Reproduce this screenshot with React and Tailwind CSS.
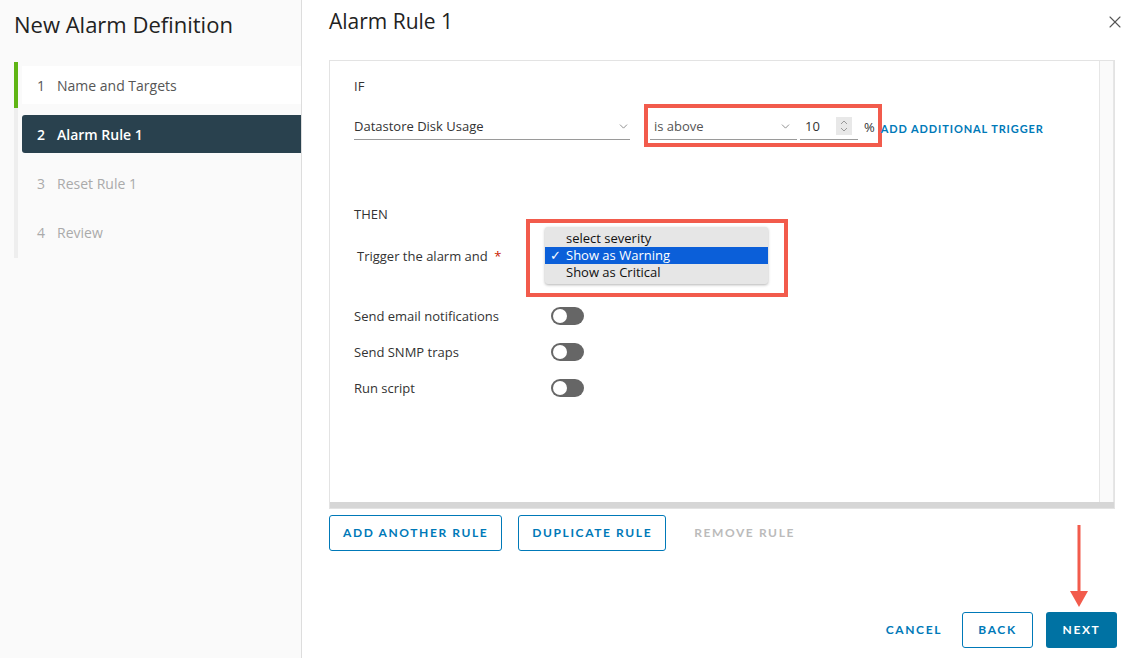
import { X, ChevronDown } from 'lucide-react';

const steps = [
  { n: 1, label: 'Name and Targets', state: 'done' },
  { n: 2, label: 'Alarm Rule 1', state: 'active' },
  { n: 3, label: 'Reset Rule 1', state: 'todo' },
  { n: 4, label: 'Review', state: 'todo' },
];

const caps = { fontFamily: 'Lato, "Noto Sans", sans-serif' };

const Toggle = () => (
  <div className="w-[33px] h-[18px] rounded-full bg-[#666] flex items-center px-[2px]">
    <div className="w-[14px] h-[14px] rounded-full bg-white" />
  </div>
);

// flechitas del input numerico
const Spinner = () => (
  <svg width="16" height="18" viewBox="0 0 16 18" className="mr-[6px]">
    <rect width="16" height="18" fill="#e8e8e8" />
    <path d="M5 7 L8 4 L11 7" fill="none" stroke="#999" strokeWidth="1" />
    <path d="M5 11 L8 14 L11 11" fill="none" stroke="#999" strokeWidth="1" />
  </svg>
);

const App = () => {
  return (
    <div className="w-[1125px] h-[658px] flex bg-white text-[#333] overflow-hidden" style={{ fontFamily: '"Open Sans", "Noto Sans", sans-serif' }}>
      {/* barra lateral con los pasos */}
      <div className="w-[302px] shrink-0 bg-[#fafafa] border-r border-[#ddd] flex flex-col">
        <h1 className="text-[22px] leading-none pl-[14px] pt-[13px] text-[#222]">New Alarm Definition</h1>
        <div className="ml-[14px] mt-[27px] border-l-4 border-[#eee] flex flex-col gap-[11px] pt-[4px] h-[196px] relative">
          <div className="absolute left-[-4px] top-0 w-[4px] h-[46px] bg-[#60b515]" />
          {steps.map((s) => (
            <div
              key={s.n}
              className={
                'h-[38px] shrink-0 ml-[4px] flex items-center pl-[15px] text-[14px] ' +
                (s.state === 'done' ? 'bg-white text-[#565656]' : '') +
                (s.state === 'active' ? 'bg-[#29414e] text-white font-semibold rounded-l-[3px]' : '') +
                (s.state === 'todo' ? 'text-[#aaa]' : '')
              }
            >
              <span className="w-[20px]">{s.n}</span>
              <span>{s.label}</span>
            </div>
          ))}
        </div>
      </div>

      {/* contenido principal */}
      <div className="flex-1 flex flex-col pl-[27px] pr-[8px]">
        <div className="flex items-start justify-between pt-[6px] h-[60px]">
          <h2 className="text-[21px] text-[#222]">Alarm Rule 1</h2>
          <X className="w-[20px] h-[20px] mt-[6px] mr-[-8px] text-[#555]" strokeWidth={1.3} />
        </div>

        <div className="w-[786px] h-[449px] border border-[#e3e3e3] flex flex-col">
          <div className="flex flex-1 min-h-0">
            <div className="flex-1 pl-[24px] pt-[16px] text-[13px] leading-[18px]">
              <div>IF</div>
              <div className="flex items-center mt-[9px] h-[43px]">
                <div className="w-[276px] border-b border-[#9a9a9a] flex items-center justify-between h-[24px] pb-[2px] mt-[4px]">
                  <span>Datastore Disk Usage</span>
                  <ChevronDown className="w-[13px] h-[13px] text-[#777]" strokeWidth={1.5} />
                </div>
                <div className="ml-[14px] h-[43px] border-[4px] border-[#f25b4c] flex items-center pl-[2px] pr-[3px]">
                  <div className="w-[147px] border-b border-[#9a9a9a] flex items-center justify-between h-[24px] pb-[2px] pl-[4px] mt-[4px] text-[#555]">
                    <span>is above</span>
                    <ChevronDown className="w-[13px] h-[13px] text-[#777] mr-[5px]" strokeWidth={1.5} />
                  </div>
                  <div className="w-[58px] ml-[3px] border-b border-[#9a9a9a] flex items-center h-[24px] pb-[2px] pl-[5px] mt-[4px]">
                    <span className="flex-1">10</span>
                    <Spinner />
                  </div>
                  <span className="ml-[6px] mt-[2px]">%</span>
                </div>
                <span className="text-[11px] font-bold tracking-[0.9px] text-[#0079b8] mt-[6px] -ml-[1px]" style={caps}>ADD ADDITIONAL TRIGGER</span>
              </div>

              <div className="mt-[58px]">THEN</div>
              <div className="flex items-center mt-[-4px]">
                <span className="w-[172px] shrink-0 pl-[3px] whitespace-nowrap mt-[-4px]">
                  Trigger the alarm and <span className="text-[#c92100] ml-[3px]">*</span>
                </span>
                <div className="border-[4px] border-[#f25b4c] w-[262px] h-[78px] pl-[15px] pt-[4px]">
                  <div className="w-[223px] bg-[#e6e6e6] rounded-[3px] shadow-[0_1px_3px_rgba(0,0,0,0.3)] py-[3px] text-[13px] leading-[17px] text-[#111]">
                    <div className="pl-[21px]">select severity</div>
                    <div className="bg-[#0b5fd9] text-white flex">
                      <span className="w-[21px] pl-[5px]">✓</span>
                      <span>Show as Warning</span>
                    </div>
                    <div className="pl-[21px]">Show as Critical</div>
                  </div>
                </div>
              </div>

              <div className="flex flex-col gap-[18px] mt-[10px]">
                {['Send email notifications', 'Send SNMP traps', 'Run script'].map((t) => (
                  <div key={t} className="flex items-center h-[18px]">
                    <span className="w-[197px]">{t}</span>
                    <Toggle />
                  </div>
                ))}
              </div>
            </div>
            <div className="w-[15px] bg-[#fafafa] border-l border-[#e6e6e6] border-r" />
          </div>
          <div className="h-[6px] bg-[#d6d6d6]" />
        </div>

        <div className="flex items-center mt-[6px] gap-[16px]" style={caps}>
          <button className="h-[36px] px-[13px] border border-[#0079b8] rounded-[3px] text-[#0079b8] text-[12px] font-bold tracking-[1.6px]">ADD ANOTHER RULE</button>
          <button className="h-[36px] px-[13px] border border-[#0079b8] rounded-[3px] text-[#0079b8] text-[12px] font-bold tracking-[1.6px]">DUPLICATE RULE</button>
          <button className="h-[36px] px-[12px] text-[#bbb] text-[12px] font-bold tracking-[1.6px]">REMOVE RULE</button>
        </div>

        <div className="flex-1 flex items-end justify-end pb-[10px] gap-[13px] relative" style={caps}>
          <button className="h-[36px] px-[12px] text-[#0079b8] text-[12px] font-bold tracking-[1.6px] mr-[-5px]">CANCEL</button>
          <button className="h-[36px] w-[71px] border border-[#0079b8] rounded-[3px] text-[#0079b8] text-[12px] font-bold tracking-[1.6px]">BACK</button>
          <button className="h-[36px] w-[71px] bg-[#0072a3] rounded-[3px] text-white text-[12px] font-bold tracking-[1.6px]">NEXT</button>
          <svg className="absolute right-[28px] bottom-[49px]" width="20" height="84" viewBox="0 0 20 84">
            <line x1="10" y1="0" x2="10" y2="68" stroke="#f25b4c" strokeWidth="3" strokeLinecap="round" />
            <polygon points="1,66 19,66 10,82" fill="#f25b4c" />
          </svg>
        </div>
      </div>
    </div>
  );
};

export default App;
